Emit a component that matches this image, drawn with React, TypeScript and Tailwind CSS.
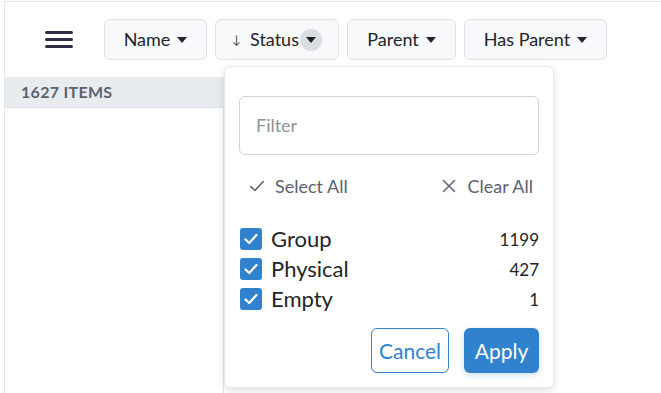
import React from "react";

const Caret = () => (
  <svg width="10" height="6" viewBox="0 0 10 6" className="ml-[7px]">
    <path d="M0 0 L10 0 L5 6 Z" fill="#212529" />
  </svg>
);

const Check = ({ size = 14, color = "#fff", w = 2.2 }: { size?: number; color?: string; w?: number }) => (
  <svg width={size} height={size} viewBox="0 0 16 16">
    <path d="M2.5 8.5 L6.2 12 L13.5 4" fill="none" stroke={color} strokeWidth={w} strokeLinecap="round" strokeLinejoin="round" />
  </svg>
);

const Box = ({ label, count }: { label: string; count: string }) => (
  <div className="flex items-center h-[30px]">
    <div className="w-[22px] h-[22px] rounded-[3px] bg-[#3182ce] flex items-center justify-center">
      <Check size={16} />
    </div>
    <span className="ml-[9px] text-[22px] text-[#212529] leading-none">{label}</span>
    <span className="ml-auto text-[17px] text-[#212529] leading-none">{count}</span>
  </div>
);

export default function App() {
  return (
    <div className="w-[661px] h-[393px] bg-white relative overflow-hidden" style={{ fontFamily: "Lato, 'Noto Sans', sans-serif" }}>
      <div className="ml-[4px] mt-[1px] border-l border-t border-[#e3e6ea] h-[392px]">
        <div className="h-[75px] flex items-center">
          <div className="ml-[40px] w-[28px] flex flex-col gap-[4px]">
            <div className="h-[3px] bg-[#2e2f45] rounded-sm" />
            <div className="h-[3px] bg-[#2e2f45] rounded-sm" />
            <div className="h-[3px] bg-[#2e2f45] rounded-sm" />
          </div>
          <div className="ml-[31px] flex gap-[8px]">
            <button className="h-[41px] w-[103px] rounded-[6px] border border-[#dde1e6] bg-[#f8f9fa] flex items-center justify-center text-[18px] text-[#212529]">
              Name<Caret />
            </button>
            <button className="h-[41px] w-[124px] rounded-[6px] border border-[#dde1e6] bg-[#f8f9fa] flex items-center pl-[16px] text-[18px] text-[#212529]">
              <span className="text-[12px] mr-[9px] text-[#444]">↓</span>Status
              <span className="ml-[1px] w-[22px] h-[22px] rounded-full bg-[#dadde2] flex items-center justify-center">
                <svg width="10" height="6" viewBox="0 0 10 6"><path d="M0 0 L10 0 L5 6 Z" fill="#212529" /></svg>
              </span>
            </button>
            <button className="h-[41px] w-[109px] rounded-[6px] border border-[#dde1e6] bg-[#f8f9fa] flex items-center justify-center text-[18px] text-[#212529]">
              Parent<Caret />
            </button>
            <button className="h-[41px] w-[143px] rounded-[6px] border border-[#dde1e6] bg-[#f8f9fa] flex items-center justify-center text-[18px] text-[#212529]">
              Has Parent<Caret />
            </button>
          </div>
        </div>
        <div className="w-[219px] h-[317px] border-r border-[#e3e6ea]">
          <div className="h-[31px] bg-[#e9ecef] border-b border-[#dde1e6] flex items-center pl-[16px] text-[16px] font-bold text-[#5a6270] tracking-[0.3px]">
            1627 ITEMS
          </div>
        </div>
      </div>

      <div className="absolute left-[224px] top-[66px] w-[330px] h-[322px] bg-white border border-[#e6e9ed] rounded-[6px] shadow-[0_3px_8px_rgba(0,0,0,0.12)] px-[14px] pt-[29px]">
        <div className="h-[59px] w-[300px] rounded-[6px] border border-[#ced4da] flex items-center pl-[16px] text-[18px] text-[#8c949c]">
          Filter
        </div>
        <div className="mt-[20px] flex items-center h-[22px] text-[18px] text-[#5a6270]">
          <span className="ml-[9px] flex items-center"><Check size={18} color="#5a6270" w={1.4} /></span>
          <span className="ml-[9px]">Select All</span>
          <span className="ml-auto flex items-center">
            <svg width="14" height="14" viewBox="0 0 14 14"><path d="M1.5 1.5 L12.5 12.5 M12.5 1.5 L1.5 12.5" stroke="#5a6270" strokeWidth="1.5" strokeLinecap="round" /></svg>
          </span>
          <span className="ml-[11px] mr-[6px]">Clear All</span>
        </div>
        <div className="mt-[27px] flex flex-col pl-[1px]">
          <Box label="Group" count="1199" />
          <Box label="Physical" count="427" />
          <Box label="Empty" count="1" />
        </div>
        <div className="mt-[14px] flex justify-end gap-[15px]">
          <button className="h-[45px] w-[78px] rounded-[6px] border border-[#3182ce] text-[#3182ce] text-[21px] bg-white">Cancel</button>
          <button className="h-[45px] w-[75px] rounded-[6px] bg-[#3182ce] text-white text-[21px] shadow-[0_2px_6px_rgba(49,130,206,0.25)]">Apply</button>
        </div>
      </div>
    </div>
  );
}
